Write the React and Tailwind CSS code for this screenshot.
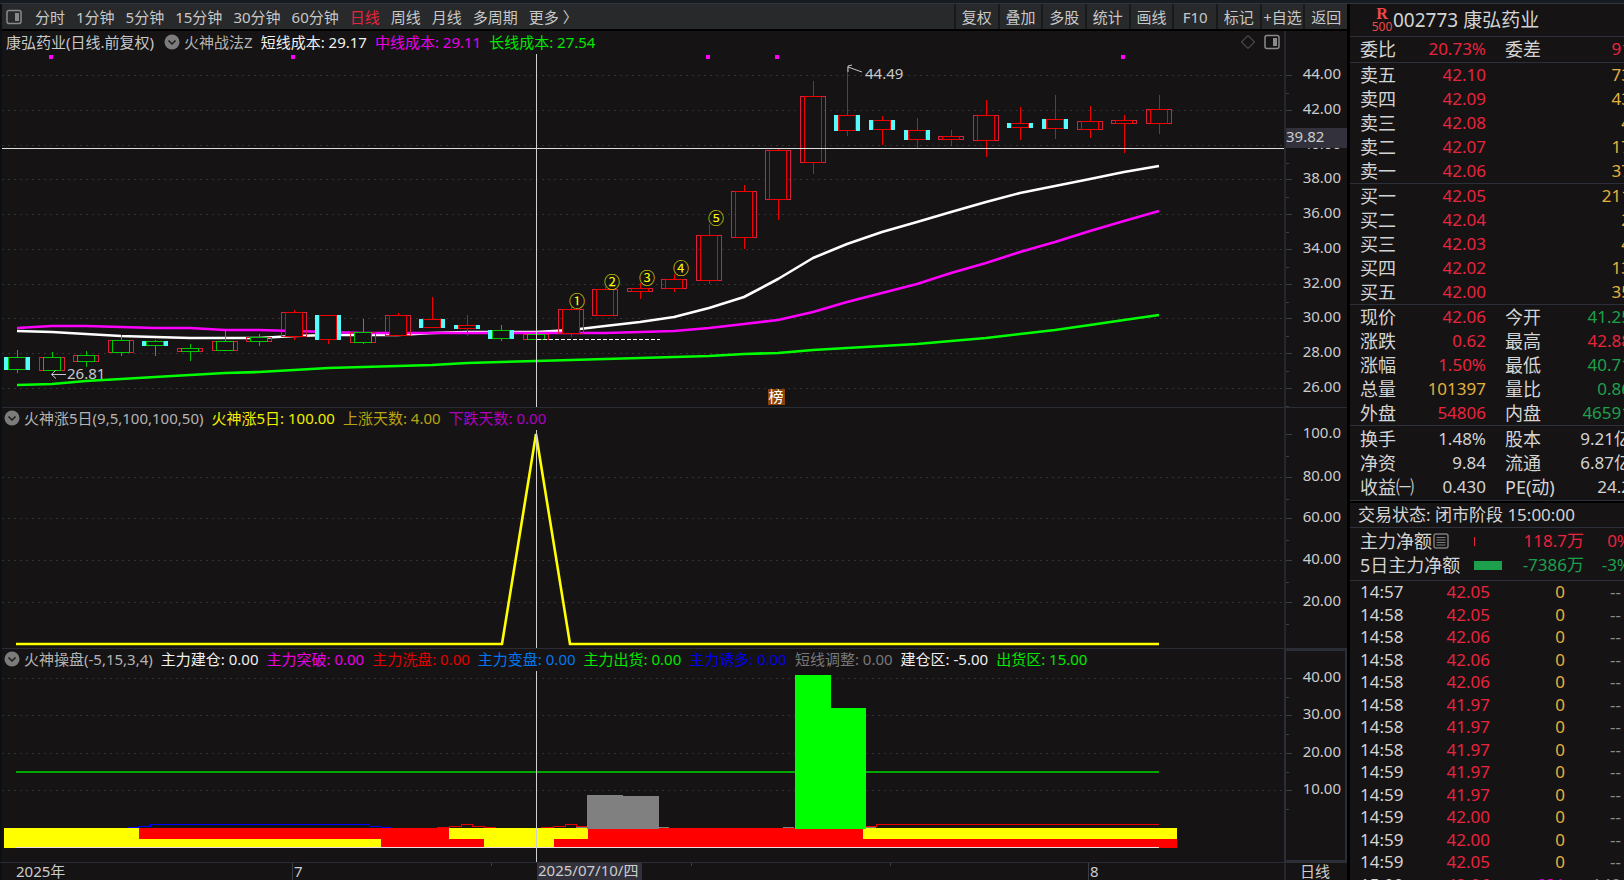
const PERIODS = ['分时', '1分钟', '5分钟', '15分钟', '30分钟', '60分钟', '日线', '周线', '月线', '多周期', '更多 〉'];
const TOOLS = ['复权', '叠加', '多股', '统计', '画线', 'F10', '标记', '+自选', '返回'];

// [high, body top, body bottom, low, outer frame (r = red, c = cyan), inner body (r = red, g = green)]
const CANDLES = [
  [350, 357, 369, 373, 'c', 'g'],
  [352, 357, 370, 371, 'r', 'g'],
  [351, 355, 361, 367, 'r', 'g'],
  [335, 340, 352, 356, 'r', 'g'],
  [340, 341, 345, 356, 'c', 'g'],
  [344, 348, 351, 361, 'r', 'g'],
  [329, 341, 350, 351, 'r', 'g'],
  [334, 337, 341, 346, 'r', 'g'],
  [310, 312, 336, 340, 'r', 'r'],
  [315, 315, 339, 344, 'c', 'r'],
  [319, 332, 342, 344, 'r', 'g'],
  [313, 315, 335, 336, 'r', 'r'],
  [297, 319, 327, 327, 'c', 'r'],
  [315, 325, 328, 336, 'c', 'r'],
  [325, 330, 338, 341, 'c', 'g'],
  [323, 334, 339, 340, 'r', 'g'],
  [307, 309, 333, 337, 'r', 'r'],
  [287, 289, 315, 316, 'r', 'r'],
  [283, 288, 291, 299, 'r', 'r'],
  [274, 279, 288, 292, 'r', 'r'],
  [224, 235, 280, 284, 'r', 'r'],
  [185, 191, 237, 249, 'r', 'r'],
  [149, 150, 199, 220, 'r', 'r'],
  [81, 96, 162, 174, 'r', 'r'],
  [67, 115, 130, 136, 'c', 'r'],
  [116, 120, 129, 145, 'c', 'r'],
  [118, 130, 139, 148, 'c', 'r'],
  [130, 136, 139, 146, 'r', 'r'],
  [100, 115, 140, 157, 'r', 'r'],
  [107, 123, 127, 140, 'c', 'r'],
  [95, 119, 128, 139, 'c', 'r'],
  [106, 121, 129, 138, 'r', 'r'],
  [115, 120, 123, 153, 'r', 'r'],
  [95, 109, 123, 134, 'r', 'r'],
];

const SHORT_COST = [331, 332, 334, 336, 337, 338, 338, 338, 336, 335, 335, 335, 333, 332, 332, 332, 330, 326, 322, 317, 308, 297, 279, 258, 244, 232, 222, 212, 202, 193, 186, 179, 172, 166];
const MID_COST = [328, 326, 326, 327, 328, 328, 330, 330, 331, 332, 333, 333, 333, 333, 333, 333, 333, 333, 332, 331, 328, 324, 320, 312, 302, 293, 284, 273, 263, 252, 242, 231, 221, 211];
const LONG_COST = [385, 384, 381, 379, 377, 375, 373, 372, 370, 368, 367, 366, 365, 363, 362, 361, 360, 359, 358, 357, 356, 354, 353, 350, 348, 346, 344, 341, 338, 334, 330, 325, 320, 315];

const xAt = (i) => Math.round(17 + i * 34.6);
const points = (list) => list.map((y, i) => `${xAt(i)},${y}`).join(' ');

const C = {
  w: 'text-[#d4d4d4]',
  r: 'text-[#e8243e]',
  g: 'text-[#1ca04c]',
  y: 'text-[#e2b23e]',
};

const ASKS = [
  ['卖五', '42.10', '73'],
  ['卖四', '42.09', '43'],
  ['卖三', '42.08', '4'],
  ['卖二', '42.07', '17'],
  ['卖一', '42.06', '37'],
];
const BIDS = [
  ['买一', '42.05', '211'],
  ['买二', '42.04', '2'],
  ['买三', '42.03', '4'],
  ['买四', '42.02', '13'],
  ['买五', '42.00', '35'],
];
const bookRow = ([label, price, volume]) => [label, price, C.r, '', volume, C.y];

const QUOTE = [
  ['现价', '42.06', C.r, '今开', '41.25', C.g],
  ['涨跌', '0.62', C.r, '最高', '42.88', C.r],
  ['涨幅', '1.50%', C.r, '最低', '40.71', C.g],
  ['总量', '101397', C.y, '量比', '0.86', C.g],
  ['外盘', '54806', C.r, '内盘', '46591', C.g],
];
const FUNDAMENTALS = [
  ['换手', '1.48%', C.w, '股本', '9.21亿', C.w],
  ['净资', '9.84', C.w, '流通', '6.87亿', C.w],
  ['收益㈠', '0.430', C.w, 'PE(动)', '24.2', C.w],
];

const TICKS = [
  ['14:57', '42.05'],
  ['14:58', '42.05'],
  ['14:58', '42.06'],
  ['14:58', '42.06'],
  ['14:58', '42.06'],
  ['14:58', '41.97'],
  ['14:58', '41.97'],
  ['14:58', '41.97'],
  ['14:59', '41.97'],
  ['14:59', '41.97'],
  ['14:59', '42.00'],
  ['14:59', '42.00'],
  ['14:59', '42.05'],
  ['15:00', '42.06', '681', '149'],
];

function PanelIcon() {
  return (
    <svg width="16" height="16" viewBox="0 0 16 16" fill="none" aria-hidden="true">
      <rect x="1" y="1.5" width="14" height="13" rx="2" stroke="#8a8a8a" strokeWidth="1.5" />
      <rect x="9" y="4" width="4" height="8" fill="#8a8a8a" />
    </svg>
  );
}

function CollapseButton() {
  return (
    <button aria-label="收起指标" className="mr-1 shrink-0">
      <svg width="16" height="16" viewBox="0 0 16 16" className="block">
        <circle cx="8" cy="8" r="7.5" fill="#7c7c7c" />
        <path d="M4.5 6.5 8 10l3.500-3.500" fill="none" stroke="#1a1a1a" strokeWidth="1.500" />
      </svg>
    </button>
  );
}

function PaneHeader({ title, name, values, children }) {
  return (
    <div className="flex h-5 items-center overflow-hidden whitespace-nowrap text-[15px] leading-5">
      {title && <span className="mr-[10px] pl-1 text-[#c8c8c8]">{title}</span>}
      <div className={title ? 'flex items-center' : 'flex items-center pl-[2px]'}>
        <CollapseButton />
        <span className="text-[#b4b4b4]">{name}</span>
      </div>
      {values.map(([text, color]) => (
        <span key={text} className={`ml-2 ${color}`}>{text}</span>
      ))}
      {children}
    </div>
  );
}

function GridLine({ y }) {
  return <line x1="2" x2="100%" y1={y + 0.5} y2={y + 0.5} stroke="#303035" strokeDasharray="2 4" />;
}

function Axis({ top, height, major, boxed, children }) {
  const step = (major[1][0] - major[0][0]) / 2;
  return (
    <svg
      className={boxed ? 'w-[63px] shrink-0 self-stretch border-2 border-[#2a2e38]' : 'w-[63px] shrink-0 border-l-2 border-[#24272e]'}
      height={height}
    >
      <g transform={`translate(0 ${-top - (boxed ? 2 : 0)})`}>
        {major.map(([y, label]) => (
          <g key={label}>
            <path d={`M0 ${y + 0.5}h6M0 ${Math.round(y + step) + 0.5}h3`} stroke="#383c46" />
            <text x="55" y={y + 4} textAnchor="end" fontSize="15" fill="#cccccc">{label}</text>
          </g>
        ))}
        {children}
      </g>
    </svg>
  );
}

function Candle({ index, data }) {
  const [high, top, bottom, low, frame, body] = data;
  const x = xAt(index);
  const h = bottom - top;
  const ink = body === 'r' ? '#f00000' : '#00c800';
  return (
    <g shapeRendering="crispEdges">
      {frame === 'r' ? (
        <rect x={x - 12.5} y={top + 0.5} width="25" height={h} fill="none" stroke="#d8203c" />
      ) : (
        <rect x={x - 13} y={top} width="26" height={h + 1} fill="#54fcfc" />
      )}
      <rect x={x - 8.5} y={top + 0.5} width="17" height={h} fill="#151314" stroke={ink} />
      <path d={`M${x} ${high}V${top}M${x} ${bottom}V${low}`} stroke={ink} fill="none" />
    </g>
  );
}

function PriceChart() {
  return (
    <svg className="block w-full" height="354" role="img" aria-label="康弘药业日线">
      <g transform="translate(0 -53)">
        {[75, 110, 145, 179, 214, 249, 284, 318, 353, 388].map((y) => <GridLine key={y} y={y} />)}
        {[51, 293, 708, 777, 1123].map((x) => (
          <rect key={x} x={x - 2} y="55" width="4" height="4" fill="#ff00ff" />
        ))}
        <g fill="none" strokeWidth="2.6" strokeLinejoin="round">
          <polyline points={points(LONG_COST)} stroke="#00ff00" />
          <polyline points={points(SHORT_COST)} stroke="#ffffff" />
          <polyline points={points(MID_COST)} stroke="#ff00ff" />
        </g>
        {CANDLES.map((data, i) => <Candle key={i} index={i} data={data} />)}
        <line x1="537" x2="660" y1="339.5" y2="339.5" stroke="#ffffff" strokeDasharray="4 2" />
        <line x1="2" x2="100%" y1="148.5" y2="148.5" stroke="#dcdcdc" />
        <line x1="536.5" x2="536.5" y1="54" y2="407" stroke="#d0d0d0" />
        <g stroke="#c8c8c8" fill="none">
          <path d="M862 72 848 67M852 65l-4 1v6" />
          <path d="M66 374.500H52M56 370l-4.500 4.500 4.500 4" />
        </g>
        <g fontSize="15" fill="#c8c8c8">
          <text x="865" y="79">44.49</text>
          <text x="67" y="379">26.81</text>
        </g>
        <g fontSize="16" fill="#ffff00" textAnchor="middle">
          <text x="577" y="307">①</text>
          <text x="612" y="288">②</text>
          <text x="647" y="284">③</text>
          <text x="681" y="274">④</text>
          <text x="716" y="224">⑤</text>
        </g>
        <rect x="768" y="389" width="17" height="16" fill="#8a4208" />
        <text x="776" y="402" fontSize="15" fill="#ffffff" textAnchor="middle">榜</text>
      </g>
    </svg>
  );
}

function SignalChart() {
  return (
    <svg className="block w-full" height="220" role="img" aria-label="火神涨5日">
      <g transform="translate(0 -428)">
        {[477, 518, 560, 602].map((y) => <GridLine key={y} y={y} />)}
        <polyline points="16,644 502,644 536,434 570,644 1159,644" fill="none" stroke="#ffff00" strokeWidth="2.600" />
        <line x1="536.5" x2="536.5" y1="430" y2="648" stroke="#d0d0d0" />
      </g>
    </svg>
  );
}

function Bars({ y, height, spans }) {
  return spans.map(([x1, x2, fill]) => <rect key={x1} x={x1} y={y} width={x2 - x1} height={height} fill={fill} />);
}

function ControlChart() {
  return (
    <svg className="block w-full" height="193" role="img" aria-label="火神操盘">
      <g transform="translate(0 -669)" shapeRendering="crispEdges">
        {[678, 715, 753, 790].map((y) => <GridLine key={y} y={y} />)}
        <rect x="16" y="771" width="1143" height="2" fill="#00a800" />
        <g fill="none" strokeWidth="1">
          <path d="M127 827.500H138V826.500H150V824.500H369V826.500H381V827.500H392" stroke="#0000ff" />
          <path d="M437 827.500H449V826.500H461V824.500H472V826.500H484V827.500H496M541 827.500H553V826.500H565V824.500H576V826.500H588M866 826.500H876V824.500H1159" stroke="#e80000" />
          <path d="M576 827.500H588M659 827.500H669M783 827.500H794M866 827.500H876" stroke="#808080" />
        </g>
        <Bars y={828} height={11} spans={[[4, 139, '#ffff00'], [139, 449, '#ff0000'], [449, 588, '#ffff00'], [588, 863, '#ff0000'], [863, 1177, '#ffff00']]} />
        <Bars y={839} height={9} spans={[[4, 381, '#ffff00'], [381, 484, '#ff0000'], [484, 554, '#ffff00'], [554, 1177, '#ff0000']]} />
        <rect x="16" y="847" width="1143" height="1" fill="#f0dcdc" />
        <path d="M587 829V795H623V796H659V829Z" fill="#808080" />
        <path d="M795 829V675H831V708H866V829Z" fill="#00ff00" />
        <line x1="536.5" x2="536.5" y1="671" y2="862" stroke="#d0d0d0" />
      </g>
    </svg>
  );
}

function TimeAxis() {
  return (
    <div className="flex h-[18px] border-t border-[#2a2d34]">
      <svg className="block h-[17px] flex-1" role="img" aria-label="时间轴">
        <path d="M292.500 0v18M1088.500 0v18" stroke="#3a3d44" />
        <path d="M491.500 0v3M691.500 0v3M890.500 0v3" stroke="#3a3d44" />
        <rect x="537" y="0" width="105" height="18" fill="#33323c" />
        <g fontSize="15" fill="#cccccc">
          <text x="16" y="14">2025年</text>
          <text x="294" y="14">7</text>
          <text x="538" y="13">2025/07/10/四</text>
          <text x="1090" y="14">8</text>
        </g>
      </svg>
      <div className="w-[63px] shrink-0 border-l-2 border-[#24272e] pl-[14px] text-[15px] leading-4 text-[#cccccc]">日线</div>
    </div>
  );
}

function QuoteTable({ rows }) {
  return (
    <table className="w-[271px] table-fixed border-collapse">
      <colgroup>
        <col className="w-[60px]" />
        <col className="w-[66px]" />
        <col className="w-[80px]" />
        <col className="w-[65px]" />
      </colgroup>
      <tbody>
        {rows.map(([label, value, color, label2, value2, color2]) => (
          <tr key={label} className="h-6 whitespace-nowrap leading-6">
            <th scope="row" className="p-0 text-left text-lg/6 font-normal text-[#d4d4d4]">{label}</th>
            <td className={`p-0 text-right ${color}`}>{value}</td>
            <td className="p-0 pl-[19px] text-lg/6 text-[#d4d4d4]">{label2}</td>
            <td className={`p-0 text-right ${color2}`}>{value2}</td>
          </tr>
        ))}
      </tbody>
    </table>
  );
}

function FlowTable() {
  return (
    <table className="w-[271px] table-fixed border-collapse">
      <colgroup>
        <col className="w-[114px]" />
        <col className="w-[30px]" />
        <col className="w-[80px]" />
        <col className="w-[47px]" />
      </colgroup>
      <tbody>
        <tr className="h-6 whitespace-nowrap leading-6 text-[#e8243e]">
          <th scope="row" className="p-0 text-left text-lg/6 font-normal text-[#d4d4d4]">
            <span className="flex items-center gap-px">
              主力净额
              <svg width="16" height="16" viewBox="0 0 16 16" fill="none" stroke="#7c7c7c" aria-hidden="true">
                <rect x="1" y="1" width="14" height="14" rx="2" strokeWidth="1.500" />
                <path d="M3.500 4.500h9M3.500 7h9M3.500 9.500h9M3.500 12h9" />
              </svg>
            </span>
          </th>
          <td className="p-0"><div className="h-[9px] w-px bg-[#e8243e]" /></td>
          <td className="p-0 text-right">118.7万</td>
          <td className="p-0 text-right">0%</td>
        </tr>
        <tr className="h-6 whitespace-nowrap leading-6 text-[#1ca04c]">
          <th scope="row" className="p-0 text-left text-lg/6 font-normal text-[#d4d4d4]">5日主力净额</th>
          <td className="p-0"><div className="h-[9px] w-7 bg-[#1ca04c]" /></td>
          <td className="p-0 text-right">-7386万</td>
          <td className="p-0 text-right">-3%</td>
        </tr>
      </tbody>
    </table>
  );
}

function TickTable() {
  return (
    <table className="h-[315px] w-[271px] table-fixed border-collapse">
      <colgroup>
        <col className="w-[60px]" />
        <col className="w-[70px]" />
        <col className="w-[75px]" />
        <col className="w-[66px]" />
      </colgroup>
      <tbody>
        {TICKS.map(([time, price, volume = '0', count = '--'], i) => (
          <tr key={i} className="leading-[22px]">
            <td className="p-0 text-[#d4d4d4]">{time}</td>
            <td className="p-0 text-right text-[#e8243e]">{price}</td>
            <td className={volume === '0' ? 'p-0 text-right text-[#e2b23e]' : 'p-0 text-right text-[#c800c8]'}>{volume}</td>
            <td className="p-0 pr-[10px] text-right text-[#8a8a8a]">{count}</td>
          </tr>
        ))}
      </tbody>
    </table>
  );
}

function QuotePanel() {
  return (
    <aside className="w-[274px] shrink-0 overflow-hidden bg-[#151314] text-[17px]">
      <div className="w-[290px]">
        <h1 className="flex h-8 items-center pl-[21px] text-[19px] text-[#d4d4d4]">
          <span className="flex w-[22px] flex-col items-center text-[#f04848]">
            <span className="font-['Liberation_Serif'] text-base/3 font-bold">R</span>
            <span className="text-[12px]/[13px]">500</span>
          </span>
          002773 康弘药业
        </h1>
        <div className="border-y border-[#2c303a] pb-px pl-[10px]">
          <QuoteTable rows={[['委比', '20.73%', C.r, '委差', '91', C.r]]} />
        </div>
        <div className="border-b border-[#2c303a] pl-[10px]"><QuoteTable rows={ASKS.map(bookRow)} /></div>
        <div className="border-b border-[#2c303a] pl-[10px]"><QuoteTable rows={BIDS.map(bookRow)} /></div>
        <div className="border-b border-[#2c303a] pl-[10px]"><QuoteTable rows={QUOTE} /></div>
        <div className="border-b border-[#2c303a] py-px pl-[10px]"><QuoteTable rows={FUNDAMENTALS} /></div>
        <div className="border-b border-t-2 border-b-[#2c303a] border-t-black pl-2 leading-6 text-[#d4d4d4]">
          交易状态: 闭市阶段 15:00:00
        </div>
        <div className="border-b border-[#2c303a] pb-[3px] pl-[10px] pt-px"><FlowTable /></div>
        <div className="pl-[10px]"><TickTable /></div>
      </div>
    </aside>
  );
}

export default function App() {
  return (
    <div className="flex h-screen flex-col overflow-hidden bg-black font-['Noto_Sans','Noto_Sans_CJK_SC',sans-serif]">
      <div className="h-1 shrink-0 border-b border-[#32363c] bg-[#161b22]" />
      <div className="flex min-h-0 flex-1">
        <main className="flex min-w-0 flex-1 flex-col border-l-2 border-[#0a1014] pr-[3px]">
          <nav className="mb-[2px] flex h-[25px] shrink-0 items-stretch justify-between bg-[#27292b] text-[15px] text-[#c8c8c8]">
            <div className="flex min-w-0 items-center gap-[11px] overflow-hidden whitespace-nowrap pl-1 pt-px">
              <button aria-label="侧栏" className="mr-[2px]"><PanelIcon /></button>
              {PERIODS.map((label) => (
                <button key={label} className={label === '日线' ? 'text-[#e8243e]' : ''}>{label}</button>
              ))}
            </div>
            <div className="flex w-[393px] shrink-0">
              {TOOLS.map((label) => (
                <button key={label} className="flex-1 basis-0 whitespace-nowrap border-l-2 border-[#18191b] pt-px text-center">{label}</button>
              ))}
            </div>
          </nav>

          <section className="flex shrink-0 border-b border-[#2a2d34] bg-[#151314]">
            <div className="min-w-0 flex-1">
              <div className="pb-px pt-px">
                <PaneHeader
                  title="康弘药业(日线.前复权)"
                  name="火神战法Z"
                  values={[['短线成本: 29.17', 'text-[#f0f0f0]'], ['中线成本: 29.11', 'text-[#e800e8]'], ['长线成本: 27.54', 'text-[#00e800]']]}
                >
                  <span className="ml-auto flex items-center gap-2 pr-1">
                    <svg width="16" height="16" viewBox="0 0 16 16" fill="none" aria-hidden="true">
                      <path d="M8 1.500 14.500 8 8 14.500 1.500 8Z" stroke="#6a6a6a" />
                    </svg>
                    <button aria-label="显示侧栏"><PanelIcon /></button>
                  </span>
                </PaneHeader>
              </div>
              <div className="-ml-[2px]"><PriceChart /></div>
            </div>
            <Axis
              top={31}
              height={376}
              major={[[75, '44.00'], [110, '42.00'], [145, '40.00'], [179, '38.00'], [214, '36.00'], [249, '34.00'], [284, '32.00'], [318, '30.00'], [353, '28.00'], [388, '26.00']]}
            >
              <rect x="-2" y="128" width="65" height="20" fill="#32313c" />
              <text x="0" y="142" fontSize="15" fill="#cccccc">39.82</text>
            </Axis>
          </section>

          <section className="flex shrink-0 border-b border-[#2a2d34] bg-[#151314]">
            <div className="min-w-0 flex-1">
              <PaneHeader
                name="火神涨5日(9,5,100,100,50)"
                values={[['火神涨5日: 100.00', 'text-[#f0f000]'], ['上涨天数: 4.00', 'text-[#b8a410]'], ['下跌天数: 0.00', 'text-[#b000c0]']]}
              />
              <div className="-ml-[2px]"><SignalChart /></div>
            </div>
            <Axis top={408} height={240} major={[[434, '100.0'], [477, '80.00'], [518, '60.00'], [560, '40.00'], [602, '20.00']]} />
          </section>

          <section className="flex shrink-0 bg-[#151314]">
            <div className="min-w-0 flex-1">
              <PaneHeader
                name="火神操盘(-5,15,3,4)"
                values={[
                  ['主力建仓: 0.00', 'text-[#f0f0f0]'],
                  ['主力突破: 0.00', 'text-[#e800e8]'],
                  ['主力洗盘: 0.00', 'text-[#e00000]'],
                  ['主力变盘: 0.00', 'text-[#0078f0]'],
                  ['主力出货: 0.00', 'text-[#00e800]'],
                  ['主力诱多: 0.00', 'text-[#0000e8]'],
                  ['短线调整: 0.00', 'text-[#787878]'],
                  ['建仓区: -5.00', 'text-[#f0f0f0]'],
                  ['出货区: 15.00', 'text-[#00e800]'],
                ]}
              />
              <div className="-ml-[2px]"><ControlChart /></div>
            </div>
            <Axis top={649} height={213} boxed major={[[678, '40.00'], [715, '30.00'], [753, '20.00'], [790, '10.00']]} />
          </section>

          <div className="shrink-0 bg-[#151314]"><div className="-ml-[2px]"><TimeAxis /></div></div>
        </main>
        <QuotePanel />
      </div>
    </div>
  );
}
